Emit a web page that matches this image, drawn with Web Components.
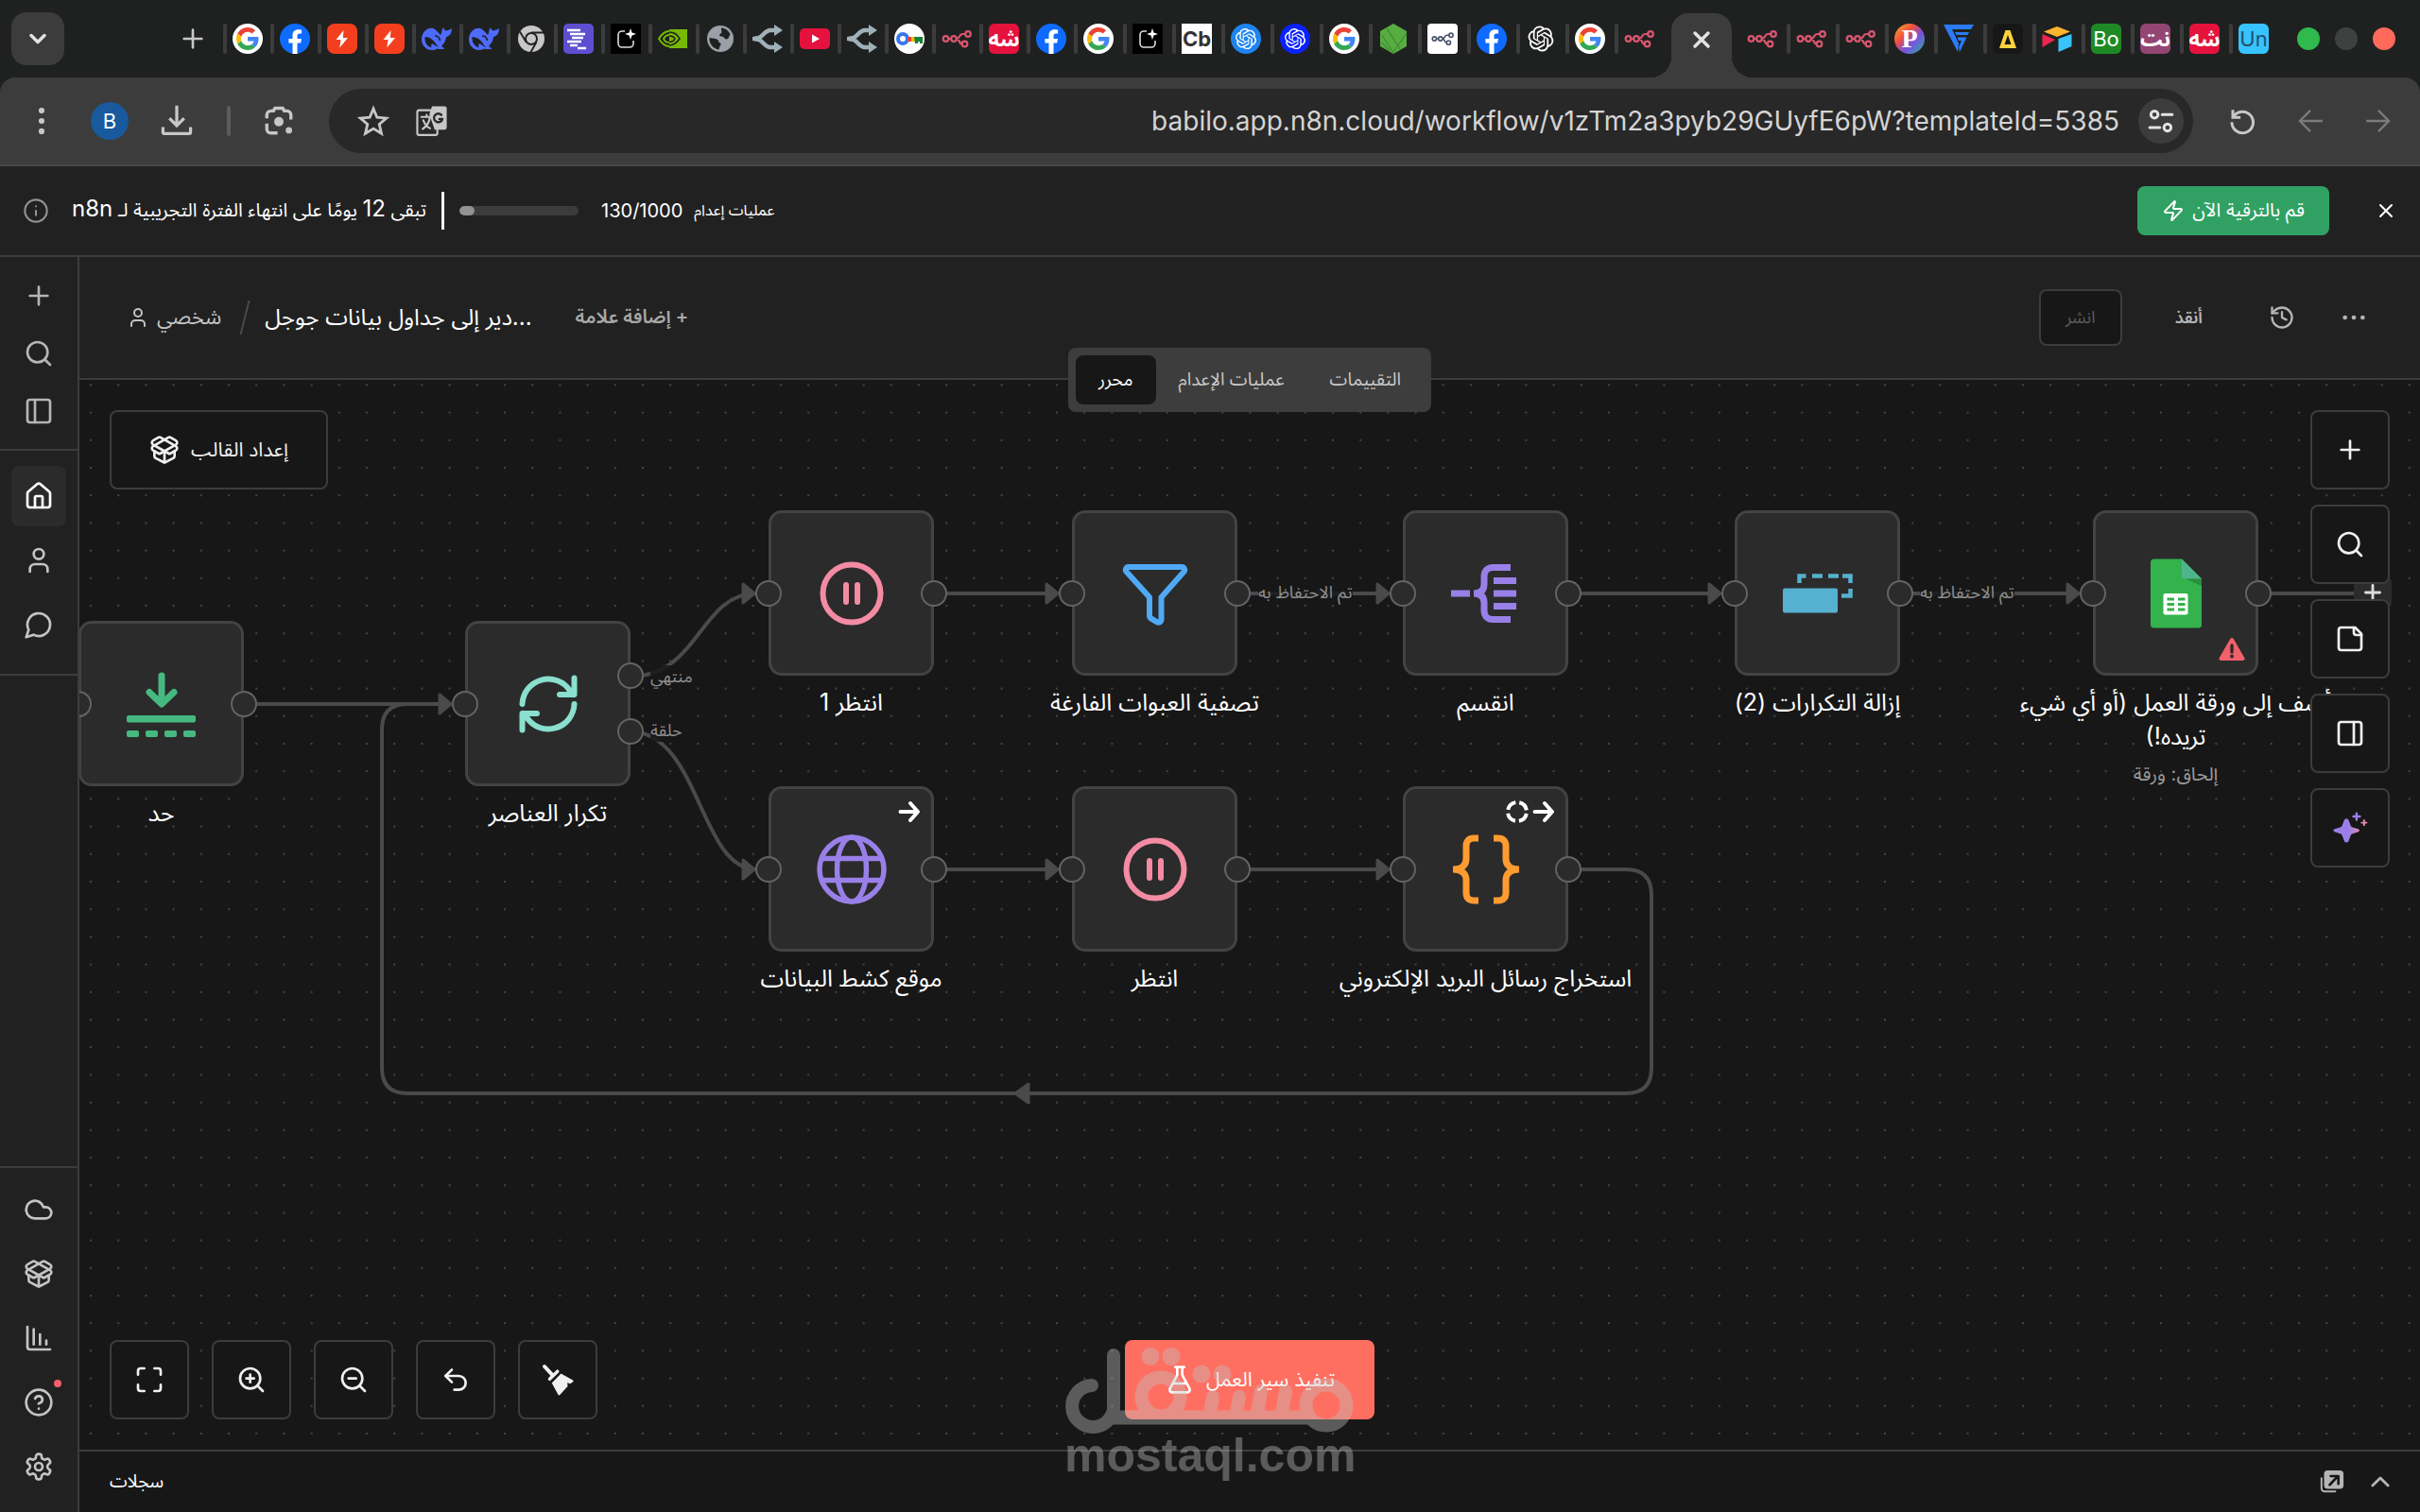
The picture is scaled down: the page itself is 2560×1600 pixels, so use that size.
<!DOCTYPE html>
<html lang="ar">
<head>
<meta charset="utf-8">
<title>n8n</title>
<style>
html,body{margin:0;height:100%;background:#171717}
body{font-family:Inter,"Noto Sans Arabic","DejaVu Sans",sans-serif;color:#fff;
--line:#3c3c3c;--panel:#212121;--canvas:#171717;--node:#2b2b2b;--edge:#4a4a4a;--muted:#c4c4c4}
</style>
</head>
<body>
<app-window></app-window>
<script>
const RESET = `*{box-sizing:border-box}button,input{font:inherit;color:inherit;background:none;border:0;margin:0;padding:0}button{cursor:pointer;display:flex;align-items:center;justify-content:center}svg{display:block}`;
function define(tag, css, html) {
  customElements.define(tag, class extends HTMLElement {
    constructor() {
      super();
      this.attachShadow({mode: 'open'});
    }
    connectedCallback() {
      const body = typeof html === 'function' ? html(this) : html;
      this.shadowRoot.innerHTML = `<style>${RESET}${css}</style>${body}`;
    }
  });
}

/* ---------- line icons, 24-unit grid ---------- */
const ICONS = {
  plus: '<path d="M5 12h14M12 5v14"/>',
  search: '<circle cx="11" cy="11" r="8"/><path d="m21 21-4.3-4.3"/>',
  panelLeft: '<rect x="3" y="3" width="18" height="18" rx="2"/><path d="M9 3v18"/>',
  panelRight: '<rect x="3" y="3" width="18" height="18" rx="2"/><path d="M15 3v18"/>',
  home: '<path d="M15 21v-8a1 1 0 0 0-1-1h-4a1 1 0 0 0-1 1v8"/><path d="M3 10a2 2 0 0 1 .709-1.528l7-5.999a2 2 0 0 1 2.582 0l7 5.999A2 2 0 0 1 21 10v9a2 2 0 0 1-2 2H5a2 2 0 0 1-2-2z"/>',
  user: '<path d="M19 21v-2a4 4 0 0 0-4-4H9a4 4 0 0 0-4 4v2"/><circle cx="12" cy="7" r="4"/>',
  chat: '<path d="M7.9 20A9 9 0 1 0 4 16.1L2 22Z"/>',
  cloud: '<path d="M17.5 19H9a7 7 0 1 1 6.71-9h1.79a4.5 4.5 0 1 1 0 9Z"/>',
  box: '<path d="M12 22v-9"/><path d="M15.17 2.21a1.67 1.67 0 0 1 1.63 0L21 4.57a1.93 1.93 0 0 1 0 3.36L8.82 14.79a1.655 1.655 0 0 1-1.64 0L3 12.43a1.93 1.93 0 0 1 0-3.36z"/><path d="M20 13v3.87a2.06 2.06 0 0 1-1.11 1.83l-6 3.08a1.93 1.93 0 0 1-1.78 0l-6-3.08A2.06 2.06 0 0 1 4 16.87V13"/><path d="M21 12.43a1.93 1.93 0 0 0 0-3.36L8.83 2.2a1.64 1.64 0 0 0-1.63 0L3 4.57a1.93 1.93 0 0 0 0 3.36l12.18 6.86a1.636 1.636 0 0 0 1.63 0z"/>',
  chart: '<path d="M13 17V9M18 17v-3M3 3v16a2 2 0 0 0 2 2h16M8 17V5"/>',
  help: '<circle cx="12" cy="12" r="10"/><path d="M9.09 9a3 3 0 0 1 5.83 1c0 2-3 3-3 3M12 17h.01"/>',
  info: '<circle cx="12" cy="12" r="10"/><path d="M12 16v-4M12 8h.01"/>',
  gear: '<path d="M12.22 2h-.44a2 2 0 0 0-2 2v.18a2 2 0 0 1-1 1.73l-.43.25a2 2 0 0 1-2 0l-.15-.08a2 2 0 0 0-2.73.73l-.22.38a2 2 0 0 0 .73 2.73l.15.1a2 2 0 0 1 1 1.72v.51a2 2 0 0 1-1 1.74l-.15.09a2 2 0 0 0-.73 2.73l.22.38a2 2 0 0 0 2.73.73l.15-.08a2 2 0 0 1 2 0l.43.25a2 2 0 0 1 1 1.73V20a2 2 0 0 0 2 2h.44a2 2 0 0 0 2-2v-.18a2 2 0 0 1 1-1.73l.43-.25a2 2 0 0 1 2 0l.15.08a2 2 0 0 0 2.73-.73l.22-.39a2 2 0 0 0-.73-2.73l-.15-.08a2 2 0 0 1-1-1.74v-.5a2 2 0 0 1 1-1.74l.15-.09a2 2 0 0 0 .73-2.73l-.22-.38a2 2 0 0 0-2.73-.73l-.15.08a2 2 0 0 1-2 0l-.43-.25a2 2 0 0 1-1-1.73V4a2 2 0 0 0-2-2z"/><circle cx="12" cy="12" r="3"/>',
  history: '<path d="M3 12a9 9 0 1 0 9-9 9.75 9.75 0 0 0-6.74 2.74L3 8"/><path d="M3 3v5h5M12 7v5l4 2"/>',
  dots: '<circle cx="4" cy="12" r="1"/><circle cx="12" cy="12" r="1"/><circle cx="20" cy="12" r="1"/>',
  fit: '<path d="M8 3H5a2 2 0 0 0-2 2v3M21 8V5a2 2 0 0 0-2-2h-3M3 16v3a2 2 0 0 0 2 2h3M16 21h3a2 2 0 0 0 2-2v-3"/>',
  zoomIn: '<circle cx="11" cy="11" r="8"/><path d="m21 21-4.3-4.3M11 8v6M8 11h6"/>',
  zoomOut: '<circle cx="11" cy="11" r="8"/><path d="m21 21-4.3-4.3M8 11h6"/>',
  undo: '<path d="M9 14 4 9l5-5"/><path d="M4 9h10.5a5.5 5.5 0 0 1 0 11H11"/>',
  broom: '<path d="m1.5 1.500 6 6.500" stroke-width="3"/><path d="M5.600 11.500 11.800 5.400" stroke-width="2.600"/><g fill="currentColor" stroke="none"><path d="M14.600 7.200 24 12.300c.6.400.5 1.300-.1 1.600l-2 1.200-2.300-.7.300 2.900-6 6.600c-.6.700-1.500.5-1.700-.3L7.300 14.600z"/></g>',
  note: '<path d="M16 3H5a2 2 0 0 0-2 2v14a2 2 0 0 0 2 2h14a2 2 0 0 0 2-2V8Z"/><path d="M15 3v4a2 2 0 0 0 2 2h4"/>',
  zap: '<path d="M4 14a1 1 0 0 1-.78-1.63l9.9-10.2a.5.5 0 0 1 .86.46l-1.92 6.02A1 1 0 0 0 13 10h7a1 1 0 0 1 .78 1.63l-9.9 10.2a.5.5 0 0 1-.86-.46l1.92-6.02A1 1 0 0 0 11 14z"/>',
  flask: '<path d="M14 2v6a2 2 0 0 0 .245.96l5.510 10.080A2 2 0 0 1 18 22H6a2 2 0 0 1-1.755-2.960l5.510-10.080A2 2 0 0 0 10 8V2M6.450 15h11.100M8.500 2h7"/>',
  x: '<path d="M18 6 6 18M6 6l12 12"/>',
  up: '<path d="m5 15.500 7-7 7 7"/>',
  down: '<path d="m6 9 6 6 6-6"/>',
  sparkle: '<defs><linearGradient id="s" x1="0" x2="1"><stop offset=".6" stop-color="#9b7fe8"/><stop offset="1" stop-color="#e08bb0"/></linearGradient></defs><g transform="translate(-1.500 -1) scale(1.120)"><path stroke="none" fill="url(#s)" d="M9.500 5c.9 0 1.400.7 1.700 1.500l1.200 3.200c.3.800.7 1.200 1.500 1.500l4 1.300c1.100.4 1.100 1.600 0 2l-4 1.300c-.8.300-1.200.7-1.500 1.500l-1.200 3.200c-.3.900-.8 1.500-1.700 1.500s-1.400-.6-1.700-1.500l-1.200-3.200c-.3-.8-.7-1.200-1.500-1.500l-4-1.300c-1.100-.4-1.100-1.600 0-2l4-1.300c.8-.3 1.200-.7 1.500-1.500l1.200-3.200C8.100 5.700 8.600 5 9.500 5z"/><path stroke="#9b7fe8" stroke-width="1.600" d="M16.700 1.300v4.600M14.400 3.600h4.600"/><path stroke="#e08bb0" stroke-width="1.300" d="M22 6.300v3.400M20.300 8h3.400"/></g>',
  popout: '<path d="M3.500 8.500v10a3 3 0 0 0 3 3h10.500" stroke-width="1.800"/><rect x="6" y="1" width="19" height="18" rx="3.500" fill="currentColor" stroke="none"/><path stroke="#171717" d="M11.500 15 19 7M12.500 6.500H20v7.500" stroke-width="2.400"/>',
  menu: '<g fill="currentColor" stroke="none"><circle cx="12" cy="3.800" r="2.300"/><circle cx="12" cy="12" r="2.300"/><circle cx="12" cy="20.200" r="2.300"/></g>',
  download: '<path stroke-linecap="butt" stroke-linejoin="miter" d="M12 .5v14.500M6.500 10l5.500 5.500L17.500 10M1.700 16.500v4a1 1 0 0 0 1 1h18.600a1 1 0 0 0 1-1v-4" stroke-width="2.300"/>',
  lens: '<path stroke-linecap="butt" d="M3 10V7.500a3 3 0 0 1 3-3h2l1-2h6l1 2h2a3 3 0 0 1 3 3V11M3 14v4a3 3 0 0 0 3 3h5" stroke-width="2.400"/><circle cx="12" cy="12.500" r="3.500" fill="currentColor" stroke="none"/><circle cx="19.500" cy="19" r="2.400" fill="currentColor" stroke="none"/>',
  star: '<path stroke-linejoin="miter" d="m12 2.800 2.700 6.500 7 .6-5.300 4.600 1.600 6.900-6-3.700-6 3.700 1.600-6.900-5.300-4.600 7-.6z"/>',
  translate: '<rect x="1" y="4" width="15" height="18.500" rx="1.500" stroke-width="1.500"/><path d="M4 9h8M8 7.500V9M5 18c3-2 5-5 5.500-9M5.500 11.500c1 2.500 3 5 5 6" stroke-width="1.500"/><path fill="currentColor" stroke="none" d="M12 1h9.500A1.500 1.500 0 0 1 23 2.500V17a1.500 1.500 0 0 1-1.500 1.500H14L10 7z"/><path stroke="#282828" stroke-width="1.700" d="M19 7.500a3.200 3.200 0 1 0 .8 3H17.500"/>',
  tune: '<g stroke-width="2.400"><circle cx="6.500" cy="6.500" r="3"/><path d="M13 6.500h8.500M2.500 17.500H11"/><circle cx="17.500" cy="17.500" r="3"/></g>',
  reload: '<path stroke-linecap="butt" stroke-linejoin="miter" stroke-width="2.400" d="M4 2.500V9h6.500M4.500 8.500A9 9 0 1 1 3.200 13"/>',
  back: '<path stroke-linecap="butt" stroke-linejoin="miter" d="M23 12H2.500M12 2.500 2.500 12l9.500 9.500"/>',
  forward: '<path stroke-linecap="butt" stroke-linejoin="miter" d="M1 12h20.500M12 2.500l9.500 9.500-9.500 9.500"/>',
  arrowBold: '<path stroke-width="4" d="M2.500 12h18M13 3l8 9-8 9"/>',
  dashRing: '<circle cx="12" cy="12" r="10" stroke-width="4" stroke-linecap="butt" stroke-dasharray="11.700 4" stroke-dashoffset="-2"/>'
};
define('ui-icon', ':host{display:block;flex:none}', el => {
  const s = el.getAttribute('size') || 32;
  return `<svg width="${s}" height="${s}" viewBox="0 0 24 24" overflow="visible" fill="none" stroke="currentColor" stroke-width="${el.getAttribute('weight') || 2}" stroke-linecap="round" stroke-linejoin="round" aria-hidden="true">${ICONS[el.getAttribute('name')]}</svg>`;
});
const icon = (name, size = 32, weight = 2) => `<ui-icon name="${name}" size="${size}" weight="${weight}"></ui-icon>`;

/* ---------- node pictures, drawn around the node centre ---------- */
const ART = {
  pause: '<circle r="30.500" fill="none" stroke="#f38ba3" stroke-width="6"/><path d="M-6-9V9M6-9V9" stroke="#f38ba3" stroke-width="6" stroke-linecap="round"/>',
  funnel: '<path d="M-28-28H28a3 3 0 0 1 2.400 5L6.500 4V28a3 3 0 0 1-4.400 2.400l-6.600-4A3 3 0 0 1-6 24V4L-30.400-23a3 3 0 0 1 2.400-5z" fill="none" stroke="#4fa9f5" stroke-width="6" stroke-linejoin="round"/>',
  globe: '<g fill="none" stroke="#9980e8" stroke-width="5.500"><circle r="34"/><ellipse rx="15.500" ry="34"/><path d="M-32-11.500H32M-32 11.500H32"/></g>',
  limit: '<g fill="none" stroke="#46b980" stroke-width="7" stroke-linecap="round" stroke-linejoin="round"><path d="M0-30V-1M-13-12.500 0 0 13-12.500"/></g><g fill="#46b980"><rect x="-37" y="12" width="73" height="7.500" rx="2"/><rect x="-37" y="28" width="13" height="7" rx="2"/><rect x="-17" y="28" width="13" height="7" rx="2"/><rect x="3" y="28" width="13" height="7" rx="2"/><rect x="23" y="28" width="13" height="7" rx="2"/></g>',
  loop: '<g fill="none" stroke="#8adfce" stroke-width="6" stroke-linecap="round" stroke-linejoin="round"><path d="M-27.500 0A27.500 27.500 0 0 1 23-14L27-10M27.500-27.500V-10H12M27.500 0A27.500 27.500 0 0 1-23 14L-27 10M-27.500 27.500V10H-12"/></g>',
  split: '<g fill="none" stroke="#9980e8" stroke-width="7"><path d="M-37 0h20M-13 0c8 0 11-4 11-10v-8c0-6 4-9.500 9-9.500H26M-13 0c8 0 11 4 11 10v8c0 6 4 9.500 9 9.500H26M8-13.500H32M8 0H32M8 13.500H32"/></g>',
  dup: '<rect x="-37" y="-5.500" width="58" height="26" rx="2" fill="#56b0cf"/><path d="M-19.500-11V-18.500h7M-6-18.500H5M11-18.500H22M26-18.500h8.500V-11M34.500-5V2.500H25" fill="none" stroke="#56b0cf" stroke-width="4.500"/>',
  sheets: '<path d="M-23-36.500H6L27-15.500V33a3.500 3.500 0 0 1-3.500 3.500h-47A3.500 3.500 0 0 1-27 33V-33a3.500 3.500 0 0 1 4-3.500z" fill="#34b24c"/><path d="M6-36.500 27-15.500H9a3 3 0 0 1-3-3z" fill="#4fb58a"/><path d="M10-15.500H27V-8z" fill="#2b8f40"/><rect x="-13.500" y="0" width="26" height="22.500" rx="2" fill="#fff"/><path d="M-9.500 6h7.500M2 6H9.500M-9.500 11.500h7.500M2 11.500H9.500M-9.500 17h7.500M2 17H9.500" stroke="#34b24c" stroke-width="3"/>',
  code: '<g fill="none" stroke="#ff9b30" stroke-width="7"><path d="M-8-33h-5c-5 0-8 3-8 8v14c0 6-4 11-14 11 10 0 14 5 14 11V25c0 5 3 8 8 8h5"/><path d="M8-33h5c5 0 8 3 8 8v14c0 6 4 11 14 11-10 0-14 5-14 11V25c0 5-3 8-8 8H8"/></g>'
};
define('node-art', ':host{display:block}', el =>
  `<svg width="80" height="80" viewBox="-40 -40 80 80" aria-hidden="true">${ART[el.getAttribute('name')]}</svg>`);

/* ---------- favicons ---------- */
const OPENAI = 'M22.28 9.82a5.98 5.98 0 0 0-.52-4.91 6.05 6.05 0 0 0-6.510-2.9A6.070 6.070 0 0 0 4.980 4.180a5.980 5.980 0 0 0-4 2.900 6.050 6.050 0 0 0 .740 7.100 5.980 5.980 0 0 0 .510 4.910 6.050 6.050 0 0 0 6.510 2.900A5.980 5.980 0 0 0 13.260 24a6.060 6.060 0 0 0 5.770-4.210 5.990 5.990 0 0 0 4-2.900 6.060 6.060 0 0 0-.750-7.070zm-9.020 12.610a4.480 4.480 0 0 1-2.880-1.040l.140-.080 4.780-2.760a.790.790 0 0 0 .390-.680v-6.740l2.020 1.170a.070.070 0 0 1 .040.050v5.580a4.500 4.500 0 0 1-4.490 4.500zm-9.660-4.130a4.470 4.470 0 0 1-.530-3.010l.140.080 4.780 2.760a.770.770 0 0 0 .780 0l5.840-3.370v2.330a.080.080 0 0 1-.030.060L9.740 19.950a4.500 4.500 0 0 1-6.140-1.650zM2.340 7.900a4.490 4.490 0 0 1 2.370-1.970V11.600a.770.770 0 0 0 .390.680l5.810 3.350-2.020 1.170a.080.080 0 0 1-.070 0l-4.830-2.790A4.500 4.500 0 0 1 2.340 7.870zm16.600 3.850L13.100 8.360 15.120 7.200a.080.080 0 0 1 .070 0l4.830 2.790a4.490 4.490 0 0 1-.680 8.100v-5.670a.790.790 0 0 0-.400-.670zm2.010-3.020-.140-.090-4.770-2.780a.780.780 0 0 0-.790 0L9.410 9.230V6.900a.070.070 0 0 1 .030-.060l4.830-2.790a4.500 4.500 0 0 1 6.680 4.660zM8.310 12.860l-2.020-1.160a.080.080 0 0 1-.040-.060V6.070a4.500 4.500 0 0 1 7.380-3.450l-.140.080L8.700 5.460a.790.790 0 0 0-.390.680zm1.100-2.360 2.600-1.500 2.610 1.500v3l-2.600 1.500-2.610-1.500Z';
const n8n = c => `<g fill="none" stroke="${c}" stroke-width="2.200"><circle cx="4.500" cy="16" r="2.800"/><circle cx="13" cy="16" r="2.800"/><circle cx="28" cy="11" r="2.800"/><circle cx="24.500" cy="21.500" r="2.800"/><path d="M7.300 16h3M15.800 16c4 0 2.500-5 6.500-5h3M15.800 16c4 0 2 5.500 6 5.500"/></g>`;
const FAV = {
  google: '<circle cx="16" cy="16" r="16" fill="#fff"/><g transform="translate(4 4) scale(.5)"><path fill="#EA4335" d="M24 9.500c3.540 0 6.710 1.220 9.210 3.600l6.850-6.850C35.900 2.380 30.470 0 24 0 14.620 0 6.510 5.380 2.560 13.220l7.980 6.190C12.430 13.720 17.740 9.500 24 9.500z"/><path fill="#4285F4" d="M46.980 24.550c0-1.570-.15-3.090-.38-4.550H24v9.020h12.940c-.58 2.960-2.260 5.480-4.780 7.180l7.730 6c4.510-4.180 7.090-10.360 7.090-17.650z"/><path fill="#FBBC05" d="M10.530 28.590c-.48-1.450-.76-2.990-.76-4.590s.27-3.140.76-4.590l-7.980-6.190C.92 16.460 0 20.120 0 24s.92 7.540 2.560 10.780l7.970-6.190z"/><path fill="#34A853" d="M24 48c6.480 0 11.930-2.130 15.890-5.810l-7.730-6c-2.150 1.450-4.920 2.300-8.160 2.300-6.260 0-11.570-4.220-13.470-9.910l-7.980 6.190C6.510 42.620 14.620 48 24 48z"/></g>',
  facebook: '<circle cx="16" cy="16" r="16" fill="#0f6bff"/><path fill="#fff" d="M22.200 20.600l.7-4.600h-4.400v-3c0-1.300.6-2.500 2.600-2.500h2V6.600s-1.800-.3-3.600-.3c-3.600 0-6 2.200-6 6.200V16H9.400v4.600h4.100V32h5V20.600z"/>',
  bolt: '<rect width="32" height="32" rx="8" fill="#f43f1e"/><path fill="#fff" d="M17.500 7 9.500 17h5l-1.200 8.500L22 15h-5.200z"/>',
  whale: '<path fill="#4d6bfe" d="M0 17C0 9 6 4 12 5c3 1 5 4 8 7 1.500-1 .5-5 3-8 .5 2.500 2 3.500 3.500 3.500C28 6.500 30 6.500 32 5c0 5-2.500 8.500-6 9-.5 5-3 7.500-5 10l3.500 2.500c-3.500 1-6 .5-8 0C12 29 7 28 4.500 26 1.500 23.500 0 20.500 0 17z"/><path fill="#1f2120" d="M3.500 14c5 0 9 3 12 8 1 1.500 2 2 2.500 3-3-1-5-3-7-4-1 1.500-1 3-.5 4.500C6 24 3 20 3.500 14z"/><path d="M14 13c3 0 5 2 5.500 5" stroke="#1f2120" stroke-width="1.600" fill="none"/>',
  chrome: '<circle cx="16" cy="16" r="14" fill="#c7c7c7"/><circle cx="16" cy="16" r="7" fill="#1f2120"/><circle cx="16" cy="16" r="5" fill="#c7c7c7"/><path d="M16 9.500h13M10.500 19.500 4 8.500M21.500 19.500 15 31" stroke="#1f2120" stroke-width="1.800"/>',
  docs: '<rect width="32" height="32" rx="5" fill="#5d4fd0"/><path d="M4 7h14M7 11h16M9 15h12M4 19h15M7 23h8M15 26h9" stroke="#fff" stroke-width="2.400"/>',
  spark: '<rect width="32" height="32" fill="#000"/><path d="M15 8h-3a4 4 0 0 0-4 4v9a4 4 0 0 0 4 4h8a4 4 0 0 0 4-4v-3" fill="none" stroke="#ddd" stroke-width="1.600"/><path fill="#fff" d="M21 5l1.500 4.500L27 11l-4.500 1.500L21 17l-1.500-4.500L15 11l4.500-1.500z"/>',
  nvidia: '<path d="M12 6h19v20H12z" fill="#76b900"/><g fill="none" stroke="#1f2120" stroke-width="1.600"><path d="M12 9c6 0 9 3 11 7-3 4-6 7-11 7"/><path d="M12 13c3 0 5 1 6 3-1 2-3 3.500-6 3.500"/></g><path d="M12 8C7 8 4 11 1 16c3 5 6 8 11 8M12 12c-3 0-5 2-6 4 1 3 3 4 6 4" fill="none" stroke="#76b900" stroke-width="1.900"/>',
  earth: '<circle cx="16" cy="16" r="14" fill="#9aa0a6"/><path fill="#1f2120" d="M17 4.500c4 0 8 3 9.500 7-2 2-1 5-4 5s-2-3-5-3-3-2-1-3 0-3 .5-6zM4.500 15l6 1c3 .5 4 2 4 4 2 0 3 2 1 4l-1 3.500C8 26.500 4 21 4.500 15z"/>',
  fork: '<path d="M26 7H19C12 7 11 16 3 16c8 0 9 9 16 9h7" fill="none" stroke="#9fb0b8" stroke-width="4.500"/><path fill="#9fb0b8" d="M0 14l5-1v6l-5-1zM23 1l9 6-9 6zM23 19l9 6-9 6z"/>',
  youtube: '<rect y="5" width="32" height="22" rx="5" fill="#e5123d"/><path fill="#fff" d="M13 11.500v9l8-4.500z"/>',
  key: '<circle cx="16" cy="16" r="16" fill="#fff"/><circle cx="9" cy="16" r="5" fill="none" stroke="#3b78e7" stroke-width="4"/><path d="M14 14h5v5h-5z" fill="#ea4335"/><path d="M18 14h4v5h-4z" fill="#fbbc05"/><path d="M21 14h9v7h-3v-2h-2v2h-3z" fill="#188038"/>',
  n8n: n8n('#d9566f'),
  n8nWhite: '<rect width="32" height="32" rx="4" fill="#fff"/><g transform="translate(4 4) scale(.75)">' + n8n('#49536b') + '</g>',
  aiSky: `<circle cx="16" cy="16" r="16" fill="#1d84f0"/><path fill="#fff" transform="translate(5 5) scale(.92)" d="${OPENAI}"/>`,
  aiBlue: `<circle cx="16" cy="16" r="16" fill="#0a22ff"/><path fill="#fff" transform="translate(5 5) scale(.92)" d="${OPENAI}"/>`,
  ai: `<path fill="#fff" transform="translate(2.500 2.500) scale(1.120)" d="${OPENAI}"/>`,
  hex: '<path fill="#58ad41" d="M16 0l14 8v16l-14 8-14-8V8z"/><path d="M4 12l12 19M4 20l8 9M30 10 16 30M9 5l14 22" stroke="#3d8a35" stroke-width="1.200"/>',
  funnelV: '<path fill="#2a7bf6" d="M0 1h32l-3 5H9l7 15-1 9z"/><path fill="#2a7bf6" d="M12 9h15l-1.500 3H13.500zM14.500 14.500h10L17 30l-1-5 3-7h-3z"/>',
  delta: '<rect width="32" height="32" rx="6" fill="#171717"/><path d="M13.500 7h5L25 26H7z" fill="#ffd23e"/><path d="M16 12l3.500 10h-7z" fill="#171717"/>',
  airtable: '<path fill="#ffb62e" d="M2 8.500 16 3l14 5.500L16 14z"/><path fill="#39c5fb" d="M17.500 16 31.500 11v13l-14 6z"/><path fill="#f02450" d="M.5 11 14 17 .5 25z"/>',
  product: '<defs><linearGradient id="p" x1="0" x2="1" y2="1"><stop stop-color="#ffb02e"/><stop offset=".35" stop-color="#f0503c"/><stop offset=".6" stop-color="#7a50e0"/><stop offset="1" stop-color="#27b3a0"/></linearGradient></defs><circle cx="16" cy="16" r="16" fill="url(#p)"/>'
};
const TXT = {
  Cb: ['#fff', '#333', 'Cb', 0, 'b'], Bo: ['#1f8a25', '#fff', 'Bo', 6, ''], net: ['#934673', '#fff', 'نت', 6, 'b'],
  shh: ['#e5123d', '#fff', 'شه', 6, 'b'], Un: ['#37c3ff', '#23506b', 'Un', 6, '']
};
define('fav-icon', `:host{display:block;width:32px;height:32px;flex:none}.t,.p{width:32px;height:32px;display:flex;align-items:center;justify-content:center;font-size:22px;line-height:32px;overflow:hidden}.b{font-weight:700}.p{font-family:"Liberation Serif",serif;font-size:28px;margin-top:-32px;font-weight:700}`, el => {
  const n = el.getAttribute('name');
  if (TXT[n]) {
    const [bg, fg, t, r, b] = TXT[n];
    return `<span class="t ${b}" style="background:${bg};color:${fg};border-radius:${r}px">${t}</span>`;
  }
  return `<svg width="32" height="32" viewBox="0 0 32 32" aria-hidden="true">${FAV[n]}</svg>` + (n === 'product' ? '<span class="p">P</span>' : '');
});

const tab = (n, cls) => `<button class="tab ${cls}" aria-label="علامة تبويب"><i></i><fav-icon name="${n}"></fav-icon></button>`;
define('browser-tabs', `
:host{display:flex;height:82px;background:#1f2120;align-items:center;padding:0 26px 0 12px}
.find{width:56px;height:56px;border-radius:16px;background:#3c3c3c;color:#e3e3e3}
.new{width:64px;height:56px;margin:0 0 0 104px;color:#c7c7c7}
.tab{height:32px;width:50px;justify-content:flex-start}
.tab i{width:4px;height:32px;border-radius:2px;background:#3c3c3c;margin-right:6px}
.w{width:52px}.after i{visibility:hidden}
.active{width:64px;height:68px;margin:0 6px 0 8px;padding-bottom:12px;align-self:flex-end;background:#3c3c3c;border-radius:18px 18px 0 0;position:relative;color:#e3e3e3}
.active::before,.active::after{content:"";position:absolute;bottom:0;width:22px;height:22px}
.active::before{right:100%;background:radial-gradient(circle at 0 0,transparent 22px,#3c3c3c 22px)}
.active::after{left:100%;background:radial-gradient(circle at 100% 0,transparent 22px,#3c3c3c 22px)}
.lights{display:flex;gap:16px;margin-left:auto}.lights b{width:24px;height:24px;border-radius:50%}`,
`<button class="find" aria-label="بحث">${icon('down', 28, 3)}</button><button class="new" aria-label="جديد">${icon('plus', 32, 2)}</button>` +
['google','facebook','bolt','bolt','whale','whale','chrome','docs','spark','nvidia','earth','fork','youtube','fork','key','n8n','shh','facebook'].map(n => tab(n, '')).join('') +
['google','spark','Cb','aiSky','aiBlue','google','hex','n8nWhite','facebook','ai','google','n8n'].map(n => tab(n, 'w')).join('') +
`<button class="active" aria-label="إغلاق">${icon('x', 28, 3)}</button>` +
['n8n','n8n','n8n','product','funnelV','delta','airtable','Bo','net','shh','Un'].map((n, i) => tab(n, i ? 'w' : 'w after')).join('') +
`<div class="lights"><b style="background:#30b94d"></b><b style="background:#3f4140"></b><b style="background:#ff6a5b"></b></div>`);

define('browser-toolbar', `
:host{display:block;background:#1f2120}
.bar{display:flex;align-items:center;height:94px;background:#3c3c3c;border-radius:16px 16px 0 0;border-bottom:2px solid #474747;padding:0 28px;color:#c7c7c7}
.menu{width:32px}
.av{width:40px;height:40px;border-radius:50%;background:#185a9d;color:#fff;font-size:22px;margin:0 34px 0 36px}
hr{width:4px;height:32px;border:0;border-radius:2px;background:#5c5c5c;margin:0 34px 0 36px}
.omni{flex:1;display:flex;align-items:center;height:68px;border-radius:34px;background:#282828;margin:0 36px;padding:0 10px 0 30px;gap:28px}
input{flex:1;min-width:0;text-align:right;font-size:28px;color:#d4d4d4;outline:0;direction:ltr;margin-right:-8px}
.tune{width:48px;height:48px;border-radius:50%;background:#3c3c3c;color:#e3e3e3}
.nav{display:flex;gap:40px}.nav button{width:32px}.off{color:#7b7b7b}`,
`<div class="bar"><button class="menu" aria-label="القائمة">${icon('menu', 32)}</button><button class="av">B</button>
<button aria-label="التنزيلات">${icon('download', 34)}</button><hr><button aria-label="عدسة">${icon('lens', 34)}</button>
<div class="omni"><button aria-label="إشارة">${icon('star', 34)}</button><button aria-label="ترجمة">${icon('translate', 34)}</button>
<input aria-label="العنوان" value="babilo.app.n8n.cloud/workflow/v1zTm2a3pyb29GUyfE6pW?templateId=5385"><button class="tune" aria-label="الموقع">${icon('tune', 30)}</button></div>
<div class="nav"><button aria-label="تحديث">${icon('reload', 30)}</button><button class="off" aria-label="رجوع">${icon('back', 28)}</button><button class="off" aria-label="تقدم">${icon('forward', 28)}</button></div></div>`);

define('trial-banner', `
:host{display:flex;align-items:center;height:96px;background:var(--panel);border-bottom:2px solid var(--line);padding:0 24px;flex:none}
.i{color:#929292;margin-right:24px}
.t{font-size:20px;direction:rtl;white-space:nowrap}.t b{font-size:24px;font-weight:400}
.v{width:3px;height:40px;background:#fff;margin:0 16px}
.p{width:126px;height:10px;border-radius:5px;background:#3c3c3c;overflow:hidden}.p b{display:block;width:13%;height:100%;border-radius:5px;background:#929292}
.n{font-size:20px;margin-left:24px;display:flex;align-items:center;gap:12px;white-space:nowrap}.n .s{font-size:16px}
.up{margin-left:auto;height:52px;padding:0 26px;border-radius:8px;background:#31a163;font-size:20px;gap:8px;white-space:nowrap}
.x{margin-left:48px}`,
`<span class="i">${icon('info', 28, 1.8)}</span><span class="t">تبقى <b>12</b> يومًا على انتهاء الفترة التجريبية لـ <b>n8n</b></span><span class="v"></span><span class="p"><b></b></span><span class="n"><span>130/1000</span><span class="s">عمليات إعدام</span></span>
<button class="up">${icon('zap', 24)}<span>قم بالترقية الآن</span></button><button class="x" aria-label="إغلاق">${icon('x', 24)}</button>`);

define('app-sidebar', `
:host{display:flex;flex-direction:column;width:84px;background:var(--panel);border-right:2px solid var(--line);color:#c4c4c4}
nav{display:flex;flex-direction:column;align-items:center}
.a{gap:4px;padding:12px 0;color:#b5b5b5}.a button{height:57px;width:58px}
.b{border-top:2px solid var(--line);border-bottom:2px solid var(--line);padding:16px 0 20px;gap:4px}
.b button,.c button{width:58px;height:64px;border-radius:8px}
.on{background:#2b2b2b;color:#fff}
.c{margin-top:auto;border-top:2px solid var(--line);padding:12px 0 16px;gap:4px}
.help{position:relative}.help::after{content:"";position:absolute;right:5px;top:8px;width:8px;height:8px;border-radius:50%;background:#f0616b}`,
`<nav class="a"><button aria-label="إضافة">${icon('plus')}</button><button aria-label="بحث">${icon('search')}</button><button aria-label="اللوحة">${icon('panelLeft')}</button></nav>
<nav class="b"><button class="on" aria-label="الرئيسية">${icon('home')}</button><button aria-label="شخصي">${icon('user')}</button><button aria-label="دردشة">${icon('chat')}</button></nav>
<nav class="c"><button aria-label="السحابة">${icon('cloud')}</button><button aria-label="القوالب">${icon('box')}</button><button aria-label="الرؤى">${icon('chart')}</button><button class="help" aria-label="مساعدة">${icon('help')}</button><button aria-label="الإعدادات">${icon('gear')}</button></nav>`);

define('workflow-header', `
:host{display:flex;align-items:center;height:130px;background:var(--panel);border-bottom:2px solid var(--line);padding:0 56px 0 50px;position:relative;z-index:2;flex:none;white-space:nowrap}
.own{display:flex;gap:8px;align-items:center;color:#c4c4c4;font-size:22px;text-decoration:none}
.s{width:2px;height:36px;background:#4a4a4a;transform:skewX(-14deg);margin:0 20px 0 24px}
.name{font-size:24px;direction:rtl}.tag{font-size:20px;font-weight:600;color:#a8a8a8;direction:rtl;margin-left:46px}
.pub{margin-left:auto;width:88px;height:60px;border:2px solid var(--line);border-radius:8px;background:#171717;color:#5c5c5c;font-size:18px}
.save{font-size:18px;font-weight:600;color:#b5b5b5;margin:0 70px 0 56px}
.r{color:#b5b5b5}.r+.r{margin-left:48px}
.tabs{position:absolute;left:50%;top:96px;transform:translateX(-50%);display:flex;padding:8px;border-radius:8px;background:#3d3d3d}
.tabs button{height:52px;padding:0 24px;font-size:19px;color:#c9c9c9;border-radius:8px}.tabs .on{background:#171717;color:#fff}`,
`<a class="own" href="#">${icon('user', 24)}<span>شخصي</span></a><i class="s"></i><button class="name">...دير إلى جداول بيانات جوجل</button><button class="tag">+ إضافة علامة</button>
<button class="pub" disabled>انشر</button><button class="save">أنقذ</button><button class="r" aria-label="السجل">${icon('history', 28)}</button><button class="r" aria-label="المزيد">${icon('dots', 28, 2)}</button>
<div class="tabs"><button class="on">محرر</button><button>عمليات الإعدام</button><button>التقييمات</button></div>`);

define('tool-button', `
:host{display:block}button{width:84px;height:84px;border:2px solid var(--line);border-radius:8px;background:#171717;color:#f0f0f0;gap:12px;font-size:21px;white-space:nowrap}
:host([wide]) button{width:auto;padding:0 40px}`,
el => `<button aria-label="${el.getAttribute('label') || 'إعداد القالب'}">${icon(el.getAttribute('icon'))}<slot></slot></button>`);

define('canvas-node', `
:host{position:absolute;width:175px;height:175px}
.card{width:100%;height:100%;border:3px solid #434343;border-radius:14px;background:var(--node);display:flex;align-items:center;justify-content:center}
.h{position:absolute;width:28px;height:28px;border-radius:50%;border:2px solid #636363;background:var(--node);margin:-14px;top:50%}
.in{left:0}.out{left:100%}.o1{top:58px}.o2{top:117px}
.badge{position:absolute;right:14px;top:15px;display:flex;gap:4px;color:#fff}
.warn{position:absolute;right:14px;bottom:15px}
.l{position:absolute;top:100%;left:50%;width:344px;margin:10px 0 0 -172px;text-align:center;direction:rtl;font-size:25px;line-height:36px}
.sub{font-size:20px;line-height:28px;margin-top:8px;color:#9a9a9a}`,
el => {
  const a = el.getAttribute.bind(el);
  return `<div class="card"><node-art name="${a('art')}"></node-art></div><i class="h in"></i>` +
  (a('outs') ? '<i class="h out o1"></i><i class="h out o2"></i>' : '<i class="h out"></i>') +
  (a('badge') ? `<div class="badge">${a('badge') === '2' ? icon('dashRing', 24) : ''}${icon('arrowBold', 24)}</div>` : '') +
  (a('warn') !== null ? '<svg class="warn" width="28" height="26" viewBox="0 0 28 26"><path d="M14 3 25.500 23H2.500z" fill="#f0616b" stroke="#f0616b" stroke-width="4" stroke-linejoin="round"/><path d="M14 9v7" stroke="#2b2b2b" stroke-width="3.400" stroke-linecap="round"/><circle cx="14" cy="20.500" r="1.900" fill="#2b2b2b"/></svg>' : '') +
  `<div class="l"><slot></slot>${a('sub') ? `<div class="sub">${a('sub')}</div>` : ''}</div>`;
});

const ARROW = (x, y) => `<path d="M${x - 27} ${y - 10}L${x - 15} ${y}L${x - 27} ${y + 10}z"/>`;
define('workflow-canvas', `
:host{display:flex;flex-direction:column;justify-content:space-between;flex:1;min-height:0;position:relative;overflow:hidden;background:var(--canvas);padding:32px}
.bg{position:absolute;left:0;top:0;width:100%;height:100%}
.e{position:absolute;direction:rtl;font-size:18px;line-height:24px;color:#8f8f8f;background:rgba(23,23,23,.85);white-space:nowrap}
.plus{position:absolute;left:2406px;top:210px;width:40px;height:30px;border-radius:4px;background:var(--node);color:#ddd}
.row{display:flex;justify-content:space-between;align-items:flex-start;position:relative;z-index:1}
.col{display:flex;flex-direction:column;gap:16px}.tools{display:flex;gap:24px;flex:1}
.end{flex:1}
.run{height:84px;padding:0 42px;border-radius:8px;background:#ff6f61;font-size:21px;gap:12px;white-space:nowrap}`,
`<svg class="bg" aria-hidden="true"><defs><pattern id="d" x="-2.600" y="-9.200" width="29.200" height="29.200" patternUnits="userSpaceOnUse"><rect x="13.600" y="13.600" width="2" height="2" fill="#444"/></pattern></defs><rect width="100%" height="100%" fill="url(#d)"/>
<g transform="translate(-84 -402)" fill="none" stroke="#4a4a4a" stroke-width="4">
<path d="M258 745H470M666 716C740 716 740 628 800 628M666 774C740 774 740 920 800 920M988 628H1110M1309 628H1460M1659 628H1812M2010 628H2192M2389 628H2500M988 920H1110M1309 920H1460"/>
<path d="M1659 920h61q27 0 27 27v183q0 27-27 27H431q-27 0-27-27V772q0-27 27-27h40"/>
<g fill="#4a4a4a" stroke-width="3" stroke-linejoin="round">${ARROW(492, 745)}${ARROW(813, 628)}${ARROW(813, 920)}${ARROW(1134, 628)}${ARROW(1134, 920)}${ARROW(1484, 628)}${ARROW(1484, 920)}${ARROW(1835, 628)}${ARROW(2214, 628)}<path d="M1088 1147 1074 1157 1088 1167z"/></g></g></svg>
<span class="e" style="left:604px;top:302px">منتهي</span><span class="e" style="left:604px;top:359px">حلقة</span>
<span class="e" style="left:1247px;top:213px">تم الاحتفاظ به</span><span class="e" style="left:1947px;top:213px">تم الاحتفاظ به</span>
<button class="plus" aria-label="إضافة">${icon('plus', 26, 2.6)}</button>
<canvas-node style="left:-1px;top:255px" art="limit">حد</canvas-node>
<canvas-node style="left:408px;top:255px" art="loop" outs="2">تكرار العناصر</canvas-node>
<canvas-node style="left:729px;top:138px" art="pause">انتظر 1</canvas-node>
<canvas-node style="left:1050px;top:138px" art="funnel">تصفية العبوات الفارغة</canvas-node>
<canvas-node style="left:1400px;top:138px" art="split">انقسم</canvas-node>
<canvas-node style="left:1751px;top:138px" art="dup">إزالة التكرارات (2)</canvas-node>
<canvas-node style="left:2130px;top:138px" art="sheets" warn sub="إلحاق: ورقة">أضف إلى ورقة العمل (أو أي شيء تريده!)</canvas-node>
<canvas-node style="left:729px;top:430px" art="globe" badge="1">موقع كشط البيانات</canvas-node>
<canvas-node style="left:1050px;top:430px" art="pause">انتظر</canvas-node>
<canvas-node style="left:1400px;top:430px" art="code" badge="2">استخراج رسائل البريد الإلكتروني</canvas-node>
<div class="row"><tool-button wide icon="box">إعداد القالب</tool-button>
<div class="col"><tool-button icon="plus" label="إضافة"></tool-button><tool-button icon="search" label="بحث"></tool-button><tool-button icon="note" label="ملاحظة"></tool-button><tool-button icon="panelRight" label="لوحة"></tool-button><tool-button icon="sparkle" label="مساعد"></tool-button></div></div>
<div class="row"><div class="tools"><tool-button icon="fit" label="ملاءمة"></tool-button><tool-button icon="zoomIn" label="تكبير"></tool-button><tool-button icon="zoomOut" label="تصغير"></tool-button><tool-button icon="undo" label="تراجع"></tool-button><tool-button icon="broom" label="ترتيب"></tool-button></div>
<button class="run">${icon('flask')}<span>تنفيذ سير العمل</span></button><div class="end"></div></div>`);

define('logs-panel', `
:host{display:flex;align-items:center;height:66px;border-top:2px solid var(--line);background:#171717;padding:0 28px 0 32px;flex:none;font-size:19px}
div{margin-left:auto;display:flex;gap:26px;color:#b5b5b5}`,
`<span>سجلات</span><div><button aria-label="نافذة">${icon('popout', 26)}</button><button aria-label="توسيع">${icon('up', 28, 2.4)}</button></div>`);

/* translucent brand mark laid over the page */
define('brand-mark', `
:host{position:absolute;left:50%;bottom:32px;margin-left:-154px;width:308px;display:block;opacity:.4;color:#c1c1c1;z-index:5;pointer-events:none;text-align:center}
span{display:block;font:700 50px/56px "Liberation Sans",sans-serif;margin-top:-6px}`,
`<svg width="308" height="92" viewBox="0 0 308 92" aria-hidden="true"><g fill="none" stroke="#c1c1c1" stroke-width="14" stroke-linecap="round"><path d="M29 40A22 22 0 1 0 52 60V8" /><path d="M50 74H262" stroke-linecap="butt" stroke-width="15"/><circle cx="102" cy="52" r="20.500"/><circle cx="277" cy="61" r="21.500"/><path d="M154 70 157 52M182 70 185 52M204 70 208 46M230 70 234 46"/></g><g fill="#c1c1c1"><circle cx="91" cy="9.500" r="9.500"/><circle cx="113" cy="9.500" r="9.500"/><circle cx="145" cy="28" r="9.500"/><circle cx="167" cy="28" r="9.500"/></g></svg><span>mostaql.com</span>`);

define('app-window', `
:host{display:flex;flex-direction:column;height:100vh;overflow:hidden;position:relative}
.app{flex:1;display:flex;min-height:0}main{flex:1;display:flex;flex-direction:column;min-width:0}`,
`<browser-tabs></browser-tabs><browser-toolbar></browser-toolbar><trial-banner></trial-banner>
<div class="app"><app-sidebar></app-sidebar><main><workflow-header></workflow-header><workflow-canvas></workflow-canvas><logs-panel></logs-panel></main></div><brand-mark></brand-mark>`);
</script>
</body>
</html>
